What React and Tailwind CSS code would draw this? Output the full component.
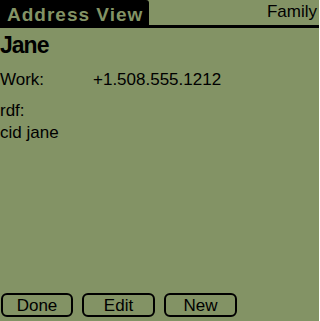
const buttons = [
    { label: 'Done', width: 'w-[72px]' },
    { label: 'Edit', width: 'w-[73px]' },
    { label: 'New', width: 'w-[73px]' },
];

export default function App() {
    return (
        <div className="flex h-[321px] w-[319px] flex-col overflow-hidden bg-[#839365] font-['Liberation_Sans',Arial,sans-serif] text-black">
            {/* title bar */}
            <div className="flex h-[25px] items-start justify-between">
                <div className="h-full w-[149px] rounded-tr-[3px] bg-black pl-[7px] pt-[5px] text-[19px] font-bold leading-none tracking-[1px] text-[#839365]">
                    Address View
                </div>
                <div className="pr-[2px] pt-[3px] text-[17px] leading-none">Family</div>
            </div>
            <div className="h-[3px] bg-black" />

            {/* record */}
            <div className="flex-1">
                <h1 className="mt-[6px] text-[23px] font-bold leading-none tracking-[-1px]">
                    Jane
                </h1>
                <div className="mt-[14px] flex text-[17px] leading-none">
                    <span className="w-[93px]">Work:</span>
                    <span>+1.508.555.1212</span>
                </div>
                <div className="mt-[12px] text-[17px] leading-[22px]">
                    <p>rdf:</p>
                    <p>cid jane</p>
                </div>
            </div>

            {/* command buttons */}
            <div className="flex gap-[9px] pb-[4px] pl-[1px]">
                {buttons.map((btn) => (
                    <button
                        key={btn.label}
                        className={`${btn.width} flex h-[24px] items-center justify-center rounded-[6px] border-2 border-black text-[17px] leading-none`}
                    >
                        {btn.label}
                    </button>
                ))}
            </div>
        </div>
    );
}
